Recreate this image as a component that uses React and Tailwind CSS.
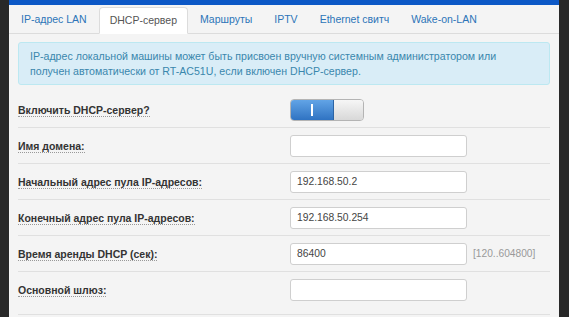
import React from "react";

const tabs = ["IP-адрес LAN", "DHCP-сервер", "Маршруты", "IPTV", "Ethernet свитч", "Wake-on-LAN"];

const rows = [
  { label: "Включить DHCP-сервер?", type: "switch" },
  { label: "Имя домена:", value: "" },
  { label: "Начальный адрес пула IP-адресов:", value: "192.168.50.2" },
  { label: "Конечный адрес пула IP-адресов:", value: "192.168.50.254" },
  { label: "Время аренды DHCP (сек):", value: "86400", hint: "[120..604800]" },
  { label: "Основной шлюз:", value: "", last: true },
];

const Toggle = () => (
  <div className="flex h-[22px] w-[74px] rounded-[4px] border border-[#b4b4b4] overflow-hidden">
    <div className="w-[43px] flex items-center justify-center bg-gradient-to-b from-[#62a4e6] to-[#2f73c2] border-r border-[#2c64a4]">
      <span className="block w-[2px] h-[12px] bg-white" />
    </div>
    <div className="flex-1 bg-gradient-to-b from-[#f6f6f6] to-[#d8d8d8]" />
  </div>
);

export default function App() {
  return (
    <div
      className="w-[569px] h-[317px] flex bg-[#282828] overflow-hidden"
      style={{ fontFamily: '"Liberation Sans", Arial, sans-serif' }}
    >
      <div className="w-[9px] shrink-0" />
      <div className="w-[550px] shrink-0 bg-[#f4f4f4] flex flex-col">
        <div className="h-[5px] bg-[#0c58c6]" />

        {/* tabs */}
        <div className="h-[29px] flex items-end pl-[2px] border-b border-[#dcdcdc]">
          {tabs.map((t, i) => (
            <div
              key={t}
              className={
                i === 1
                  ? "h-[27px] px-[10px] mr-[2px] -mb-px flex items-center bg-white border border-[#dcdcdc] border-b-white rounded-t-[4px] text-[10.5px] text-[#555] whitespace-nowrap"
                  : "h-[27px] px-[10px] mr-[2px] flex items-center text-[10.5px] text-[#2c74b8] whitespace-nowrap"
              }
            >
              {t}
            </div>
          ))}
        </div>

        <div className="px-[9px]">
          <div className="mt-[8px] h-[43px] bg-[#d9edf7] border border-[#bce8f1] rounded-[3px] pl-[11px] pt-[6px] text-[10.6px] leading-[15px] text-[#3a87ad] whitespace-nowrap">
            IP-адрес локальной машины может быть присвоен вручную системным администратором или
            <br />
            получен автоматически от RT-AC51U, если включен DHCP-сервер.
          </div>

          <div className="mt-[7px]">
            {rows.map((r) => (
              <div
                key={r.label}
                className={
                  r.last
                    ? "flex items-start pt-[7px] pb-[13px] border-b border-[#e0e0e0]"
                    : "flex items-start pt-[7px] pb-[6px] border-b border-[#e0e0e0]"
                }
              >
                <div className="w-[272px] h-[22px] flex items-center">
                  <span className="text-[10.5px] font-bold text-[#333] leading-[12px] border-b border-dotted border-[#999] whitespace-nowrap">
                    {r.label}
                  </span>
                </div>
                {r.type === "switch" ? (
                  <Toggle />
                ) : (
                  <div className="w-[177px] h-[22px] bg-white border border-[#cfcfcf] rounded-[3px] pl-[6px] flex items-center text-[10.3px] text-[#444]">
                    {r.value}
                  </div>
                )}
                {r.hint && (
                  <div className="ml-[6px] h-[22px] flex items-center text-[10.2px] text-[#999]">{r.hint}</div>
                )}
              </div>
            ))}
          </div>
        </div>
      </div>
      <div className="flex-1" />
    </div>
  );
}
